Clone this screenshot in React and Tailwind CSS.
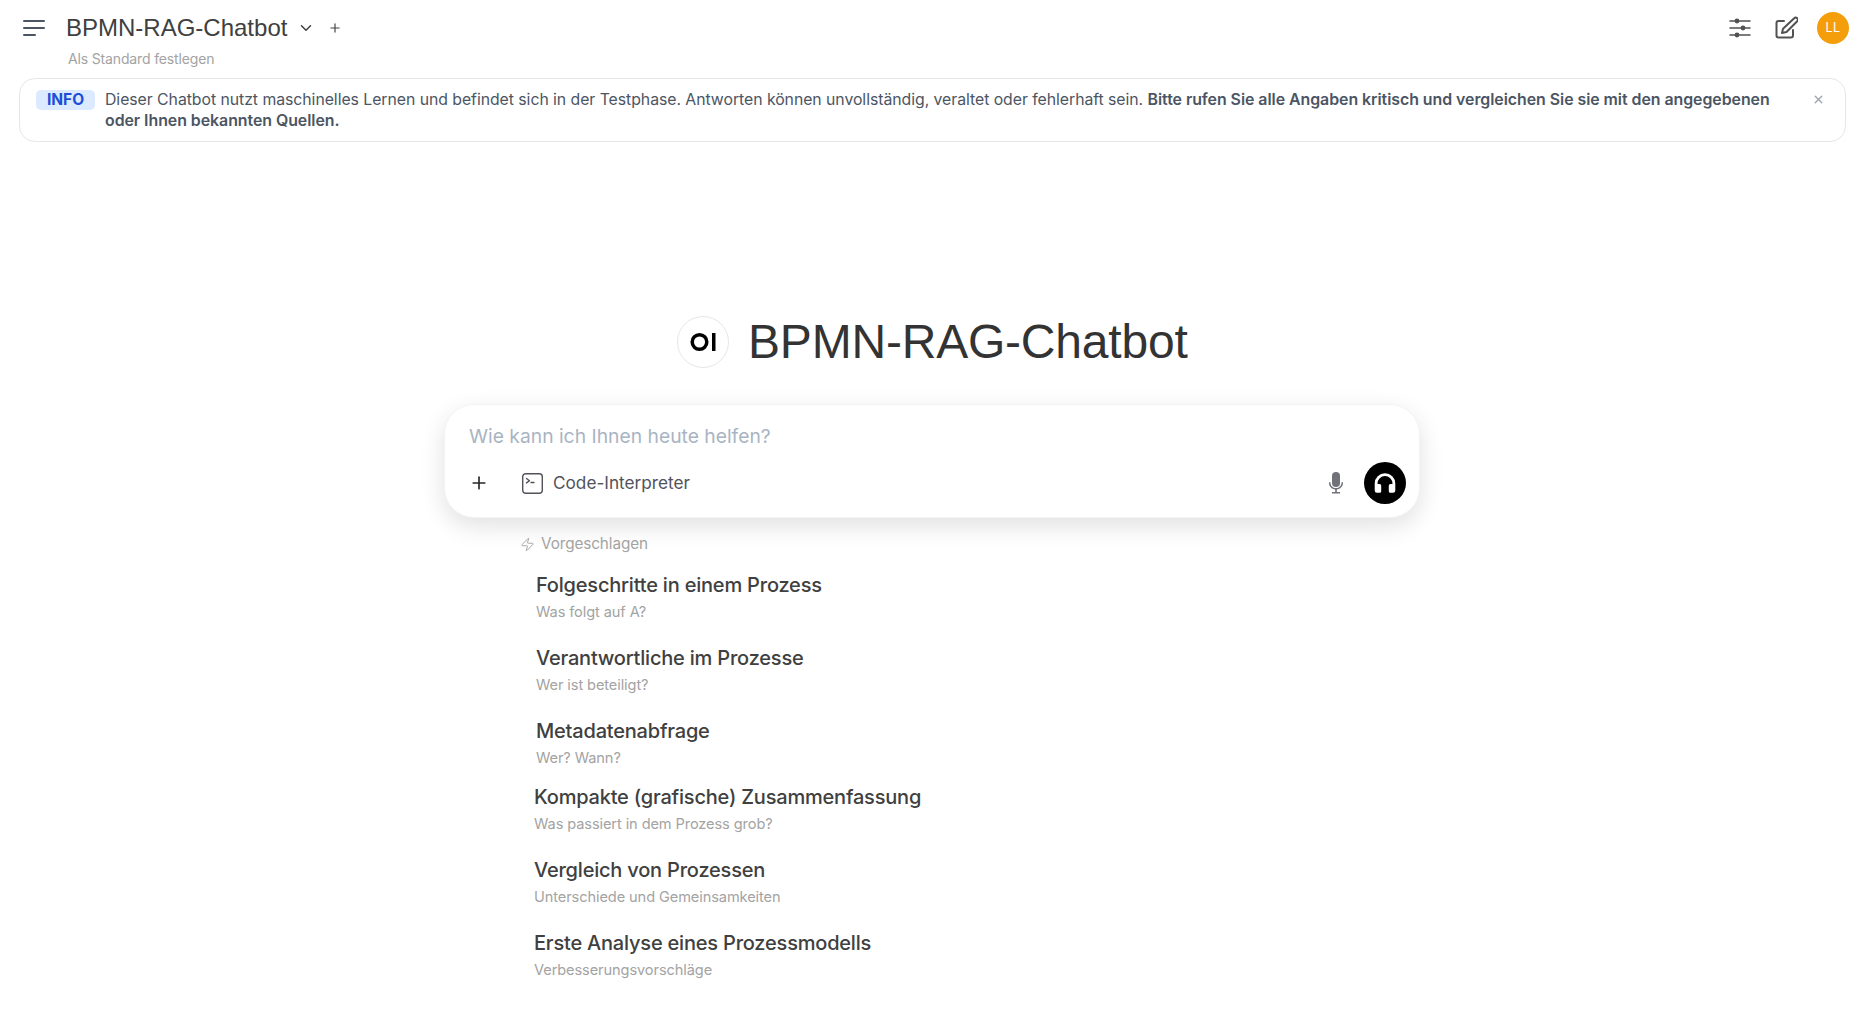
import { ChevronDown, Plus, Zap, X } from "lucide-react";

const sans = "font-['Liberation_Sans',Arial,sans-serif]";

const groupOne = [
  { title: "Folgeschritte in einem Prozess", sub: "Was folgt auf A?" },
  { title: "Verantwortliche im Prozesse", sub: "Wer ist beteiligt?" },
  { title: "Metadatenabfrage", sub: "Wer? Wann?" },
];

const groupTwo = [
  { title: "Kompakte (grafische) Zusammenfassung", sub: "Was passiert in dem Prozess grob?" },
  { title: "Vergleich von Prozessen", sub: "Unterschiede und Gemeinsamkeiten" },
  { title: "Erste Analyse eines Prozessmodells", sub: "Verbesserungsvorschläge" },
];

function Suggestion({ title, sub }) {
  return (
    <div className="h-[73px] pt-[13px]">
      <div className="text-[20px] leading-[28px] font-medium text-[#404040] tracking-[-0.2px]">{title}</div>
      <div className="mt-[3px] text-[14.6px] leading-[20px] text-[#a3a3a3] tracking-[-0.1px]">{sub}</div>
    </div>
  );
}

function TopBar() {
  return (
    <div className="flex h-[78px] items-start justify-between pl-[23px] pr-[18px]">
      <div className="flex">
        <svg className="mt-[17px] h-[22px] w-[22px] text-[#4b5563]" viewBox="0 0 22 22" fill="none" stroke="currentColor" strokeWidth="2" strokeLinecap="round">
          <path d="M1 4h20M1 11h20M1 18h11" />
        </svg>
        <div className="ml-[21px]">
          <div className="flex h-[56px] items-center">
            <span className={`${sans} text-[24px] text-[#404040]`}>BPMN-RAG-Chatbot</span>
            <ChevronDown className="ml-[10px] h-[18px] w-[18px] text-[#404040]" strokeWidth={2} />
            <Plus className="ml-[13px] h-[14px] w-[14px] text-[#404040]" strokeWidth={2} />
          </div>
          <div className="-mt-[6px] pl-[2px] text-[14px] leading-[18px] text-[#a3a3a3] tracking-[-0.15px]">Als Standard festlegen</div>
        </div>
      </div>
      <div className="flex items-center pt-[12px]">
        <svg className="h-[22px] w-[22px] text-[#525252]" viewBox="0 0 22 22" fill="none" stroke="currentColor" strokeWidth="1.600" strokeLinecap="round">
          <path d="M1 4h20M1 11h20M1 18h20" />
          <circle cx="8" cy="4" r="2.400" fill="currentColor" stroke="none" />
          <circle cx="14" cy="11" r="2.400" fill="currentColor" stroke="none" />
          <circle cx="8" cy="18" r="2.400" fill="currentColor" stroke="none" />
        </svg>
        <svg className="ml-[23px] h-[24px] w-[24px] text-[#525252]" viewBox="0 0 24 24" fill="none" stroke="currentColor" strokeWidth="2" strokeLinecap="round" strokeLinejoin="round">
          <path d="M10 5H4.500A2 2 0 0 0 2.500 7v12.500a2 2 0 0 0 2 2H17a2 2 0 0 0 2-2V14" />
          <path d="M20.200 2.300a2.100 2.100 0 0 1 3 3L12.500 16l-4.500 1 1-4.300z" />
        </svg>
        <div className="ml-[19px] flex h-[32px] w-[32px] items-center justify-center rounded-full bg-[#f59e0b] text-[12.5px] font-normal text-white tracking-[0.5px]">LL</div>
      </div>
    </div>
  );
}

function InfoBanner() {
  return (
    <div className="ml-[19px] mr-[21px] flex h-[64px] items-start rounded-2xl border border-[#e5e7eb] pl-[16px] pr-[20px] pt-[10px]">
      <span className="mt-[1px] w-[59px] shrink-0 rounded-[5px] bg-[#dbeafe] text-center text-[15.5px] leading-[20px] font-bold text-[#1d4ed8]">INFO</span>
      <p className="ml-[10px] flex-1 pr-[20px] text-[15.8px] leading-[21px] text-[#4b5563] tracking-[-0.04px]">
        Dieser Chatbot nutzt maschinelles Lernen und befindet sich in der Testphase. Antworten können unvollständig, veraltet oder fehlerhaft sein.{" "}
        <strong className="text-[15.9px] font-semibold">Bitte rufen Sie alle Angaben kritisch und vergleichen Sie sie mit den angegebenen oder Ihnen bekannten Quellen.</strong>
      </p>
      <X className="ml-[12px] mt-[4px] h-[13px] w-[13px] shrink-0 text-[#9ca3af]" strokeWidth={2.5} />
    </div>
  );
}

function PromptBox() {
  return (
    <div className="ml-[444px] mt-[32px] h-[114px] w-[976px] rounded-[30px] border border-[#f3f4f6] bg-white shadow-[0_8px_24px_rgba(0,0,0,0.12)]">
      <div className="pl-[24px] pt-[17px] text-[19.3px] leading-[28px] text-[#a9b4c2]">Wie kann ich Ihnen heute helfen?</div>
      <div className="mt-[12px] flex items-center pl-[24px] pr-[13px]">
        <Plus className="h-[20px] w-[20px] text-[#27272a]" strokeWidth={2} />
        <svg className="ml-[33px] h-[21px] w-[21px] text-[#52525b]" viewBox="0 0 21 21" fill="none" stroke="currentColor" strokeWidth="1.400" strokeLinecap="round" strokeLinejoin="round">
          <rect x="0.700" y="0.700" width="19.600" height="19.600" rx="3" />
          <path d="M4.500 5.500l3 2.200-3 2.200M9 9.500h3" />
        </svg>
        <span className="ml-[10px] text-[17.2px] text-[#52525b]">Code-Interpreter</span>
        <svg className="ml-auto mr-[1px] h-[24px] w-[24px] text-[#71717a]" viewBox="0 0 24 24" fill="currentColor">
          <rect x="8" y="1" width="8" height="15" rx="4" />
          <path d="M5 11.500a1 1 0 0 1 1.500 0c0 3.200 2.400 5.600 5.500 5.600s5.500-2.400 5.500-5.600a1 1 0 0 1 1.500 0c0 3.800-2.600 6.700-6.200 7.100V21h3.200v1.500H8V21h3.200v-2.400C7.600 18.200 5 15.300 5 11.500z" />
        </svg>
        <div className="ml-[15px] flex h-[42px] w-[42px] items-center justify-center rounded-full bg-black">
          <svg className="h-[26px] w-[26px] text-white" viewBox="0 0 24 24" fill="currentColor">
            <path d="M12 3a9.500 9.500 0 0 0-9.500 9.500V19a2 2 0 0 0 2 2H7a1.500 1.500 0 0 0 1.500-1.500v-5A1.500 1.500 0 0 0 7 13H5.100v-.5a6.900 6.900 0 0 1 13.800 0v.5H17a1.500 1.500 0 0 0-1.500 1.500v5A1.500 1.500 0 0 0 17 21h2.500a2 2 0 0 0 2-2v-6.500A9.500 9.500 0 0 0 12 3z" />
          </svg>
        </div>
      </div>
    </div>
  );
}

export default function App() {
  return (
    <div className="h-[1028px] overflow-hidden bg-white font-['Inter',sans-serif]">
      <TopBar />
      <InfoBanner />

      <div className="ml-[677px] mt-[170px] flex items-center">
        <div className="flex h-[52px] w-[52px] items-center justify-center rounded-full border border-[#e5e7eb]">
          <svg className="h-[28px] w-[28px]" viewBox="0 0 28 28" fill="none">
            <circle cx="10.500" cy="14" r="7.300" stroke="black" strokeWidth="3.500" />
            <rect x="23" y="5" width="3.500" height="18" fill="black" />
          </svg>
        </div>
        <h1 className={`${sans} ml-[19px] text-[48px] leading-[60px] text-[#333333] tracking-[-0.2px]`}>BPMN-RAG-Chatbot</h1>
      </div>

      <PromptBox />

      <div className="ml-[520px] mt-[15px] flex items-center text-[15.3px] leading-[22px] text-[#a3a3a3] tracking-[-0.1px]">
        <Zap className="h-[15px] w-[15px]" strokeWidth={1.5} />
        <span className="ml-[6px]">Vorgeschlagen</span>
      </div>

      <div className="ml-[536px] mt-[3px]">
        {groupOne.map((s) => (
          <Suggestion key={s.title} {...s} />
        ))}
      </div>
      <div className="ml-[534px] -mt-[7px]">
        {groupTwo.map((s) => (
          <Suggestion key={s.title} {...s} />
        ))}
      </div>
    </div>
  );
}
